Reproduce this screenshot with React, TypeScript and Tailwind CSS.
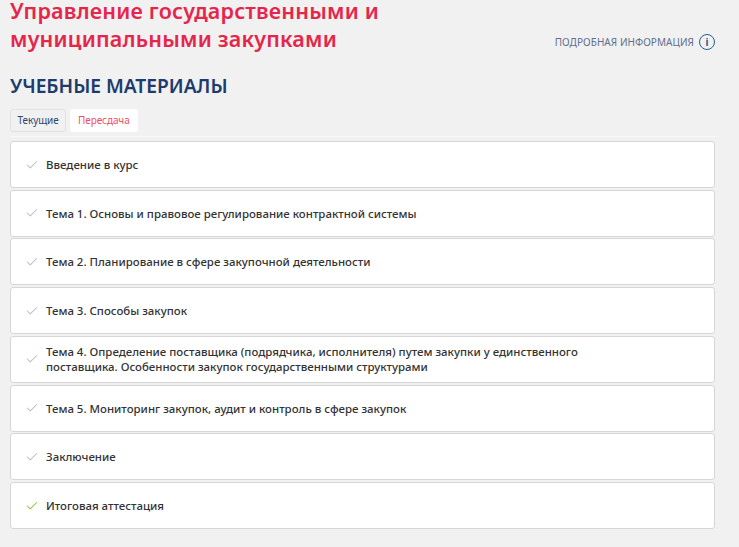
import { Check } from "lucide-react";

const lessons = [
    { title: "Введение в курс" },
    { title: "Тема 1. Основы и правовое регулирование контрактной системы" },
    { title: "Тема 2. Планирование в сфере закупочной деятельности" },
    { title: "Тема 3. Способы закупок" },
    { title: "Тема 4. Определение поставщика (подрядчика, исполнителя) путем закупки у единственного поставщика. Особенности закупок государственными структурами" },
    { title: "Тема 5. Мониторинг закупок, аудит и контроль в сфере закупок" },
    { title: "Заключение" },
    { title: "Итоговая аттестация", done: true },
];

export default function App() {
    return (
        <div className="h-[547px] w-[739px] overflow-hidden bg-[#f2f1f1] pl-[10px] pr-[24px] font-['Noto_Sans',sans-serif]">
            <div className="flex items-end justify-between">
                <h1 className="flex flex-col gap-[6px] text-[21.5px] leading-[22px] font-semibold tracking-[0.2px] text-[#e5264a]">
                    <span>Управление государственными и</span>
                    <span>муниципальными закупками</span>
                </h1>
                <a className="flex items-center gap-[5px] text-[10px] leading-[16px] tracking-[0.05px] text-[#5f6f8c]">
                    ПОДРОБНАЯ ИНФОРМАЦИЯ
                    <span className="flex h-4 w-4 items-center justify-center rounded-full border-[1.5px] border-[#1f5f96] text-[10px] font-bold text-[#1f5f96]">i</span>
                </a>
            </div>

            <h2 className="mt-[23px] text-[19.2px] leading-[26px] font-semibold text-[#1d3c6e]">УЧЕБНЫЕ МАТЕРИАЛЫ</h2>

            <div className="mt-[10px] flex gap-[3.5px] border-b border-[#fafafa] pb-[4px]">
                <button className="h-[23px] rounded-[3px] border border-[#e2e2e2] px-[6.5px] text-[10px] tracking-[-0.1px] text-[#33476b]">Текущие</button>
                <button className="h-[23px] rounded-[3px] bg-white px-[8.5px] text-[10px] tracking-[-0.1px] text-[#e8506a]">Пересдача</button>
            </div>

            <div className="mt-[4px] flex flex-col gap-[1.72px]">
                {lessons.map((l) => (
                    <div key={l.title} className="flex h-[47px] items-center rounded-[3px] border border-[#d6d6d6] bg-white pl-[14px] pr-[120px]">
                        <Check size={14} strokeWidth={1.75} className={l.done ? "shrink-0 text-[#8cc63f]" : "shrink-0 text-[#bdbdbd]"} />
                        <span className="ml-[7px] text-[11.45px] leading-[15px] font-medium text-[#333333]">{l.title}</span>
                    </div>
                ))}
            </div>
        </div>
    );
}
